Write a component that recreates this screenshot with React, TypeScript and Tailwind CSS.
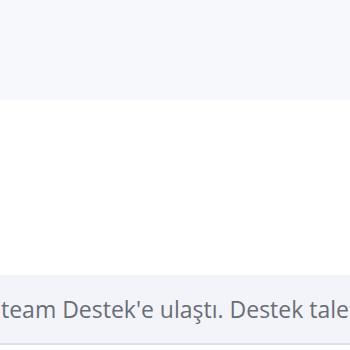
import React from "react";

export default function App() {
  return (
    <div className="w-[350px] h-[350px] overflow-hidden bg-white flex flex-col" style={{ fontFamily: "'Open Sans', 'Noto Sans', sans-serif" }}>
      <div className="h-[100px] shrink-0 bg-[#f7f8fb] shadow-[0_2px_3px_rgba(220,222,240,0.5)]" />
      <div className="h-[175px] shrink-0 bg-white" />
      <div className="h-[70px] shrink-0 bg-[#f3f4f9] border-b-2 border-[#dfe2ec] flex items-center overflow-hidden">
        <p className="whitespace-nowrap text-[23px] leading-none text-[#696d78] pl-[1px] pt-[1px]">
          team Destek'e ulaştı. Destek talebiniz
        </p>
      </div>
      <div className="flex-1 bg-white" />
    </div>
  );
}
